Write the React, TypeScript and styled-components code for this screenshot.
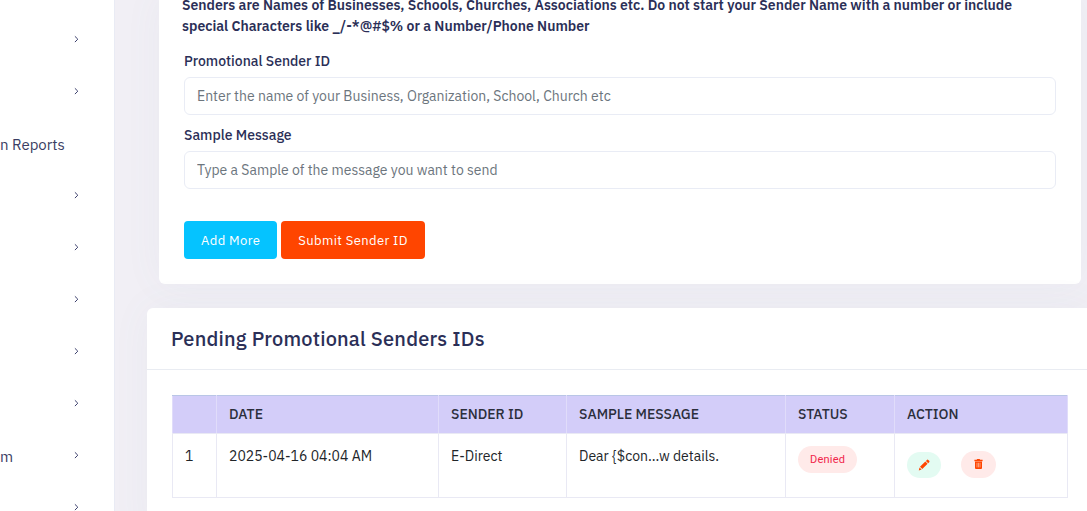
import React from "react";
import styled, { createGlobalStyle } from "styled-components";

const GlobalStyle = createGlobalStyle`
  *, *::before, *::after { box-sizing: border-box; }
  body {
    margin: 0;
    background: #f1eff5;
    color: #2b2f57;
    font-family: "IBM Plex Sans", Roboto, "Liberation Sans", sans-serif;
    font-size: 14px;
    overflow: hidden;
  }
`;

const Page = styled.div`
  display: flex;
  height: 100vh;
  overflow: hidden;
`;

const Sidebar = styled.nav`
  flex: 0 0 114px;
  background: #fff;
  overflow: hidden;
  padding-top: 13px;
`;

const MenuItem = styled.a`
  display: flex;
  align-items: center;
  justify-content: space-between;
  height: 52px;
  padding-right: 35px;
  color: #3a3d63;
  font-size: 15px;
  line-height: 20px;
  white-space: nowrap;
  text-decoration: none;

  svg { margin-left: auto; }
`;

const MenuLabel = styled.span`
  padding-top: 3px;
`;

const Content = styled.main`
  flex: 1;
  min-width: 0;
  padding-left: 32px;
  border-left: 1px solid #e9ebf4;
`;

const Card = styled.section`
  background: #fff;
  border-radius: 6px;
  box-shadow: 0 0 40px rgba(94, 140, 152, 0.05);
`;

const FormCard = styled(Card)`
  margin: -6px 6px 24px 12px;
  padding: 1px 25px 25px;
`;

const Notice = styled.p`
  margin: 0 -2px 14px;
  max-width: 860px;
  font-size: 14px;
  font-weight: 600;
  line-height: 21px;
`;

const Field = styled.div`
  margin-bottom: 10px;
`;

const Label = styled.label`
  display: block;
  margin-bottom: 6px;
  font-size: 14px;
  font-weight: 500;
  line-height: 20px;
`;

const TextInput = styled.input`
  display: block;
  width: 100%;
  height: 38px;
  padding: 0 12px;
  border: 1px solid #e9ecf5;
  border-radius: 6px;
  background: #fff;
  color: #3b3f5c;
  font: inherit;
  font-size: 14px;

  &::placeholder { color: #6c757d; opacity: 1; }
`;

const FormActions = styled.div`
  display: flex;
  gap: 4px;
  padding-top: 22px;
`;

const Button = styled.button<{ $color: string }>`
  height: 38px;
  padding: 0 17px;
  border: 0;
  border-radius: 4px;
  background: ${(p) => p.$color};
  color: #fff;
  font: inherit;
  font-size: 13px;
  letter-spacing: 0.03em;
  white-space: nowrap;
`;

const TableCard = styled(Card)`
  margin-right: -6px;
  padding-bottom: 40px;
`;

const CardTitle = styled.h2`
  margin: 0;
  padding: 16px 24px 15px;
  border-bottom: 1px solid #e9ecf2;
  font-size: 20px;
  font-weight: 500;
  letter-spacing: 0.01em;
  line-height: 30px;
`;

const TableWrap = styled.div`
  padding: 25px 25px 0;
`;

const Table = styled.table`
  width: 100%;
  border-collapse: collapse;
  table-layout: fixed;
  color: #212529;
`;

const HeadCell = styled.th<{ $width?: number }>`
  width: ${(p) => (p.$width ? `${p.$width}px` : "auto")};
  height: 38px;
  padding: 0 12px 1px;
  border: 1px solid #e0dcfa;
  border-top-color: #b9c6e6;
  border-bottom-color: #e9e9f4;
  background: #d3cdf9;
  color: #2c2f3c;
  font-size: 14px;
  font-weight: 500;
  text-align: left;
`;

const Cell = styled.td`
  height: 64px;
  padding: 12px;
  border: 1px solid #e9e9f4;
  font-size: 14px;
  line-height: 20px;
  vertical-align: top;
  white-space: nowrap;
`;

const Badge = styled.span`
  display: block;
  width: fit-content;
  padding: 0 12px;
  border-radius: 14px;
  background: #ffeae9;
  color: #f1264b;
  font-family: Roboto, sans-serif;
  font-size: 11px;
  font-weight: 400;
  letter-spacing: 0.02em;
  line-height: 27px;
`;

const RowActions = styled.div`
  display: flex;
  align-items: center;
  gap: 20px;
  padding-top: 5px;
`;

const IconButton = styled.button<{ $tint: string }>`
  display: flex;
  align-items: center;
  justify-content: center;
  padding: 7px 11px;
  border: 0;
  border-radius: 14px;
  background: ${(p) => p.$tint};
  color: #ff4500;
`;

const Chevron = () => (
  <svg width="6" height="8" viewBox="0 0 6 8" fill="none" stroke="#3b3f6c" strokeWidth="1" aria-hidden="true">
    <path d="M1.9 1.3L4.8 4.2L1.9 7.1" />
  </svg>
);

const PencilIcon = () => (
  <svg width="12" height="12" viewBox="0 0 12 12" fill="currentColor" aria-hidden="true">
    <path d="M8.9 0.9a1 1 0 0 1 1.4 0l0.9 0.9a1 1 0 0 1 0 1.4l-1 1-2.3-2.3zM7.3 2.5l2.3 2.3-5.3 5.3-2.3-2.3zM1.5 8.5l2.1 2.1-2.8 0.8z" />
  </svg>
);

const TrashIcon = () => (
  <svg width="13" height="13" viewBox="0 0 13 13" fill="currentColor" aria-hidden="true">
    <path d="M2.4 1.8h2.2L5.2 1h2.4l0.6 0.8h2.4V3.2H2.4z" />
    <path d="M3 3.6h7v6.4a1 1 0 0 1-1 1H4a1 1 0 0 1-1-1z" />
    <path d="M5 4.8v4.6M6.5 4.8v4.6M8 4.8v4.6" stroke="#ffc4ae" strokeWidth="0.7" />
  </svg>
);

const menu = [
  { label: "", arrow: true },
  { label: "", arrow: true },
  { label: "n Reports", arrow: false },
  { label: "", arrow: true },
  { label: "", arrow: true },
  { label: "", arrow: true },
  { label: "", arrow: true },
  { label: "", arrow: true },
  { label: "m", arrow: true },
  { label: "", arrow: true },
];

const columns = [
  { title: "", width: 44 },
  { title: "DATE", width: 222 },
  { title: "SENDER ID", width: 128 },
  { title: "SAMPLE MESSAGE", width: 219 },
  { title: "STATUS", width: 109 },
  { title: "ACTION" },
];

export default function App() {
  return (
    <>
      <GlobalStyle />
      <Page>
        <Sidebar>
          {menu.map((item, i) => (
            <MenuItem href="#" key={i}>
              {item.label && <MenuLabel>{item.label}</MenuLabel>}
              {item.arrow && <Chevron />}
            </MenuItem>
          ))}
        </Sidebar>
        <Content>
          <FormCard as="form">
            <Notice>
              Senders are Names of Businesses, Schools, Churches, Associations etc. Do not start your
              Sender Name with a number or include special Characters like _/-*@#$% or a Number/Phone
              Number
            </Notice>
            <Field>
              <Label htmlFor="sender">Promotional Sender ID</Label>
              <TextInput
                id="sender"
                placeholder="Enter the name of your Business, Organization, School, Church etc"
              />
            </Field>
            <Field>
              <Label htmlFor="sample">Sample Message</Label>
              <TextInput id="sample" placeholder="Type a Sample of the message you want to send" />
            </Field>
            <FormActions>
              <Button type="button" $color="#05c3ff">Add More</Button>
              <Button type="button" $color="#ff4500">Submit Sender ID</Button>
            </FormActions>
          </FormCard>
          <TableCard>
            <CardTitle>Pending Promotional Senders IDs</CardTitle>
            <TableWrap>
              <Table>
                <thead>
                  <tr>
                    {columns.map((c) => (
                      <HeadCell key={c.title} $width={c.width}>{c.title}</HeadCell>
                    ))}
                  </tr>
                </thead>
                <tbody>
                  <tr>
                    <Cell>1</Cell>
                    <Cell>2025-04-16 04:04 AM</Cell>
                    <Cell>E-Direct</Cell>
                    <Cell>{"Dear {$con...w details."}</Cell>
                    <Cell><Badge>Denied</Badge></Cell>
                    <Cell>
                      <RowActions>
                        <IconButton type="button" $tint="#e3fbf2" aria-label="Edit"><PencilIcon /></IconButton>
                        <IconButton type="button" $tint="#ffeae9" aria-label="Delete"><TrashIcon /></IconButton>
                      </RowActions>
                    </Cell>
                  </tr>
                </tbody>
              </Table>
            </TableWrap>
          </TableCard>
        </Content>
      </Page>
    </>
  );
}
